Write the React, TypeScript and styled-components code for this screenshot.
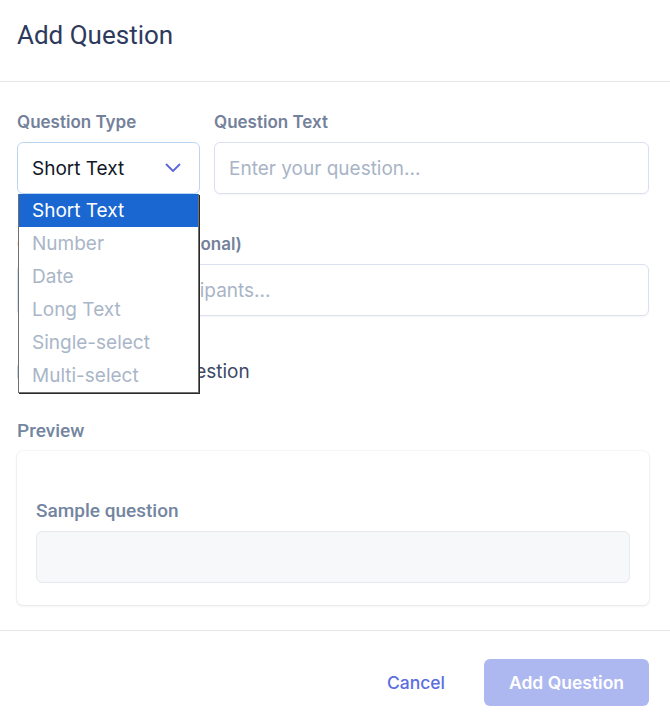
import styled, { createGlobalStyle } from 'styled-components';

const GlobalStyle = createGlobalStyle`
  * { box-sizing: border-box; }
  body {
    margin: 0;
    background: #ffffff;
    font-family: Inter, 'Liberation Sans', sans-serif;
  }
`;

const Modal = styled.div`
  width: 670px;
  height: 728px;
  display: flex;
  flex-direction: column;
  background: #ffffff;
`;

const Header = styled.header`
  height: 82px;
  padding: 20px 17px 0;
  border-bottom: 1px solid #e5e7eb;
`;

const Title = styled.h2`
  margin: 0;
  font-family: Roboto, 'Liberation Sans', sans-serif;
  font-size: 26px;
  font-weight: 400;
  line-height: 30px;
  color: #2d3a5c;
`;

const Body = styled.div`
  flex: 1;
  padding: 30px 21px 0 17px;
  display: flex;
  flex-direction: column;
`;

const TopRow = styled.div`
  position: relative;
  display: grid;
  grid-template-columns: 183px 1fr;
  gap: 14px;
`;

const Field = styled.div<{ $mt?: number }>`
  display: flex;
  flex-direction: column;
  gap: 10px;
  margin-top: ${(p) => p.$mt ?? 0}px;
`;

const Label = styled.label`
  font-size: 17px;
  font-weight: 600;
  line-height: 20px;
  color: #74819a;
`;

const Input = styled.div`
  height: 52px;
  display: flex;
  align-items: center;
  padding: 0 14px;
  border: 1px solid #d9e1ee;
  border-radius: 6px;
  font-size: 19px;
  color: #a9b4c6;
  box-shadow: 0 1px 2px rgba(15, 23, 42, 0.04);
  white-space: nowrap;
  overflow: hidden;
`;

const Select = styled.div`
  height: 52px;
  display: flex;
  align-items: center;
  justify-content: space-between;
  padding: 0 18px 0 14px;
  border: 1px solid #b9d6f2;
  border-radius: 6px;
  font-size: 19px;
  color: #111827;
`;

const OptionList = styled.ul`
  position: absolute;
  left: 1px;
  top: 82px;
  width: 181px;
  margin: 0;
  padding: 0;
  list-style: none;
  background: #ffffff;
  border: 1px solid #707070;
  border-top: none;
  box-shadow: 1px 1px 0 #2a2a2a;
  z-index: 5;
`;

const Option = styled.li<{ $active?: boolean }>`
  height: 33px;
  line-height: 34px;
  padding-left: 13px;
  font-size: 19px;
  color: ${(p) => (p.$active ? '#ffffff' : '#a9b6c8')};
  background: ${(p) => (p.$active ? '#1a67d2' : 'transparent')};
`;

const CheckRow = styled.label`
  margin-top: 45px;
  display: flex;
  align-items: center;
  gap: 6px;
  font-size: 19px;
  line-height: 22px;
  color: #3c4a66;
`;

const Checkbox = styled.span`
  width: 18px;
  height: 18px;
  border: 1px solid #cbd5e1;
  border-radius: 4px;
`;

const SectionLabel = styled.div`
  margin-top: 37px;
  font-family: Roboto, 'Liberation Sans', sans-serif;
  font-size: 19px;
  font-weight: 500;
  line-height: 22px;
  color: #74859f;
`;

const PreviewCard = styled.div`
  margin-top: 9px;
  height: 154px;
  padding: 49px 19px 0;
  border-radius: 6px;
  background: #ffffff;
  box-shadow: 0 0 0 1px rgba(15, 23, 42, 0.03), 0 1px 3px rgba(15, 23, 42, 0.09);
  display: flex;
  flex-direction: column;
  gap: 9px;
`;

const PreviewLabel = styled.div`
  font-family: Roboto, 'Liberation Sans', sans-serif;
  font-size: 19px;
  font-weight: 500;
  line-height: 22px;
  color: #74859f;
`;

const PreviewInput = styled.div`
  height: 52px;
  border: 1px solid #e6e9ee;
  border-radius: 6px;
  background: #f7f8fa;
`;

const Footer = styled.footer`
  height: 98px;
  border-top: 1px solid #e5e7eb;
  padding: 28px 21px 0 17px;
  display: flex;
  justify-content: flex-end;
  align-items: flex-start;
  gap: 14px;
`;

const Button = styled.button<{ $primary?: boolean }>`
  height: 47px;
  padding: 0 ${(p) => (p.$primary ? 0 : 25)}px;
  border: none;
  border-radius: 6px;
  white-space: nowrap;
  font-family: Inter, 'Liberation Sans', sans-serif;
  font-size: 17.5px;
  font-weight: ${(p) => (p.$primary ? 600 : 500)};
  color: ${(p) => (p.$primary ? '#ffffff' : '#5b6ee1')};
  background: ${(p) => (p.$primary ? '#aeb8f0' : 'transparent')};
  width: ${(p) => (p.$primary ? '165px' : 'auto')};
`;

const Chevron = () => (
  <svg width="16" height="10" viewBox="0 0 16 10" fill="none">
    <path d="M1.5 1.5 L8 8 L14.5 1.5" stroke="#5b67d8" strokeWidth="1.8" strokeLinecap="round" strokeLinejoin="round" />
  </svg>
);

const options = ['Short Text', 'Number', 'Date', 'Long Text', 'Single-select', 'Multi-select'];

export default function App() {
  return (
    <Modal>
      <GlobalStyle />
      <Header>
        <Title>Add Question</Title>
      </Header>
      <Body>
        <TopRow>
          <Field>
            <Label>Question Type</Label>
            <Select>
              Short Text
              <Chevron />
            </Select>
          </Field>
          <Field>
            <Label>Question Text</Label>
            <Input>Enter your question...</Input>
          </Field>
          <OptionList>
            {options.map((o, i) => (
              <Option key={o} $active={i === 0}>
                {o}
              </Option>
            ))}
          </OptionList>
        </TopRow>
        <Field $mt={40}>
          <Label>Question Subtitle (optional)</Label>
          <Input>Help text for participants...</Input>
        </Field>
        <CheckRow>
          <Checkbox />
          Mark required question
        </CheckRow>
        <SectionLabel>Preview</SectionLabel>
        <PreviewCard>
          <PreviewLabel>Sample question</PreviewLabel>
          <PreviewInput />
        </PreviewCard>
      </Body>
      <Footer>
        <Button>Cancel</Button>
        <Button $primary>Add Question</Button>
      </Footer>
    </Modal>
  );
}
